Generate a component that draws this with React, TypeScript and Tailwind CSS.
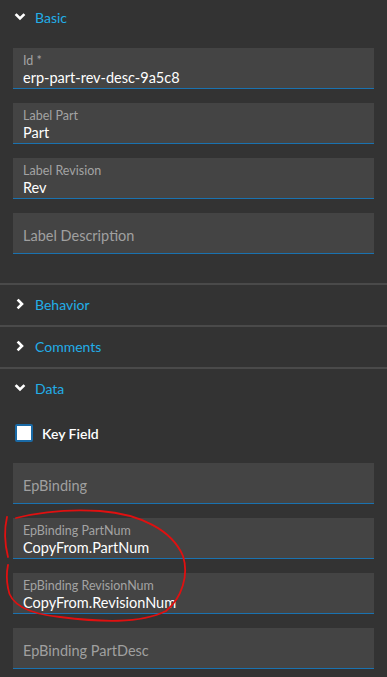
import React from 'react';

const font = { fontFamily: 'Lato, "Noto Sans", sans-serif' };

const Chevron: React.FC<{ open?: boolean }> = ({ open }) => (
  <svg className="w-[12px] h-[12px] text-white" viewBox="0 0 12 12" fill="none" stroke="currentColor" strokeWidth="2.6" strokeLinecap="square">
    {open ? <path d="M2.5 4l3.5 3.5L9.5 4" /> : <path d="M4.5 2.5L8 6l-3.5 3.5" />}
  </svg>
);

const SectionHeader: React.FC<{ title: string; open?: boolean }> = ({ title, open }) => (
  <div className="h-[40px] flex items-center pl-[14px] gap-[9px] pb-[2px]">
    <Chevron open={open} />
    <span className="text-[14px] text-[#22aee8]">{title}</span>
  </div>
);

const Field: React.FC<{ label: string; value?: string }> = ({ label, value }) => (
  <div className="mx-[13px] h-[41px] bg-[#444444] border-b border-[#1a72b0] pl-[10px] flex flex-col">
    {value !== undefined ? (
      <div className="pt-[6px] flex flex-col">
        <span className="text-[12.5px] leading-[14px] text-[#a3a3a3]">{label}</span>
        <span className="text-[14.5px] leading-[19px] text-white">{value}</span>
      </div>
    ) : (
      <span className="text-[14.5px] leading-[40px] text-[#a0a0a0] pt-[3px]">{label}</span>
    )}
  </div>
);

const Divider = () => <div className="h-[2px] bg-[#4a4a4a]" />;

export default function App() {
  return (
    <div className="relative w-[387px] h-[677px] bg-[#333333] overflow-hidden" style={font}>
      {/* Basic */}
      <div className="h-[34px] flex items-center pl-[14px] gap-[9px]">
        <Chevron open />
        <span className="text-[14px] text-[#22aee8]">Basic</span>
      </div>
      <div className="pt-[14px] pb-[29px] flex flex-col gap-[14px]">
        <Field label="Id *" value="erp-part-rev-desc-9a5c8" />
        <Field label="Label Part" value="Part" />
        <Field label="Label Revision" value="Rev" />
        <Field label="Label Description" />
      </div>

      <Divider />
      <SectionHeader title="Behavior" />
      <Divider />
      <SectionHeader title="Comments" />
      <Divider />
      <SectionHeader title="Data" open />

      {/* Data */}
      <div className="h-[18px] flex items-center gap-[9px] pl-[15px] mt-[15px]">
        <div className="w-[18px] h-[18px] bg-white border-[2px] border-[#1a6aa6] rounded-[2px]" />
        <span className="text-[14px] font-semibold text-white">Key Field</span>
      </div>
      <div className="pt-[21px] flex flex-col gap-[14px]">
        <Field label="EpBinding" />
        <Field label="EpBinding PartNum" value="CopyFrom.PartNum" />
        <Field label="EpBinding RevisionNum" value="CopyFrom.RevisionNum" />
        <Field label="EpBinding PartDesc" />
      </div>

      {/* red hand-drawn annotation */}
      <svg className="absolute inset-0 pointer-events-none" width="387" height="677" fill="none" stroke="#e01010" strokeWidth="1.8" strokeLinecap="round">
        <path d="M7 517 C4 530 5 545 8 557" />
        <path d="M16 518 C40 512 70 509 100 511 C140 514 172 530 183 556 C189 575 182 598 166 611 C140 624 100 622 60 617 C30 614 10 605 8 588 C6 578 7 570 8 565" />
      </svg>
    </div>
  );
}
